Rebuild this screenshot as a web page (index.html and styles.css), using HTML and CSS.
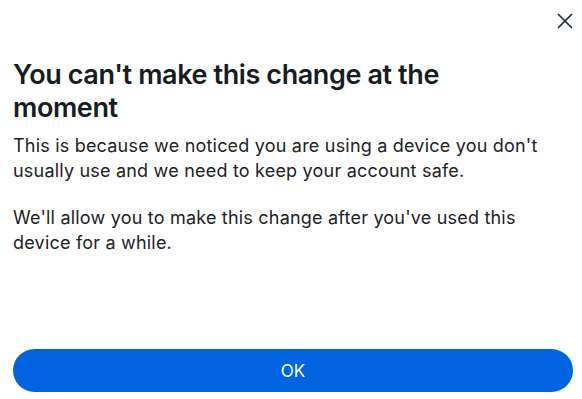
FILE: index.html
```html
<!DOCTYPE html>
<html lang="en">
<head>
<meta charset="utf-8">
<link rel="stylesheet" href="styles.css">
</head>
<body>
<div class="dialog">
  <div class="header">
    <button class="close" aria-label="Close">
      <svg width="16" height="16" viewBox="0 0 16 16"><path d="M1.5 1.5 L14.5 14.5 M14.5 1.5 L1.5 14.5" stroke="#1c2b33" stroke-width="1.7" stroke-linecap="round"/></svg>
    </button>
  </div>
  <div class="content">
    <h1 class="title">You can't make this change at the moment</h1>
    <p class="text">This is because we noticed you are using a device you don't usually use and we need to keep your account safe.</p>
    <p class="text">We'll allow you to make this change after you've used this device for a while.</p>
  </div>
  <div class="footer">
    <button class="ok">OK</button>
  </div>
</div>
</body>
</html>
```
FILE: styles.css
```css
html, body {
  margin: 0;
  padding: 0;
  background: #fff;
}
.dialog {
  height: 399px;
  display: flex;
  flex-direction: column;
  font-family: Inter, "Noto Sans", sans-serif;
  color: #1c2b33;
}
.header {
  display: flex;
  justify-content: flex-end;
  padding: 13px 9px 0 0;
}
.close {
  width: 16px;
  height: 16px;
  border: 0;
  background: none;
  padding: 0;
  display: flex;
  cursor: pointer;
}
.content {
  flex: 1;
  padding: 0 13px;
}
.title {
  margin: 29px 0 9px;
  padding-right: 24px;
  font-size: 27px;
  line-height: 33px;
  font-weight: 600;
  letter-spacing: -0.4px;
  color: #151d22;
}
.text {
  margin: 0 0 22px;
  font-size: 18px;
  line-height: 25px;
  font-weight: 400;
  letter-spacing: 0.2px;
  color: #1c2225;
}
.footer {
  padding: 0 9px 7px 13px;
}
.ok {
  width: 100%;
  height: 43px;
  border: 0;
  border-radius: 22px;
  background: #0064e0;
  color: #fff;
  font-family: Inter, "Noto Sans", sans-serif;
  font-size: 17px;
  font-weight: 400;
}
```
